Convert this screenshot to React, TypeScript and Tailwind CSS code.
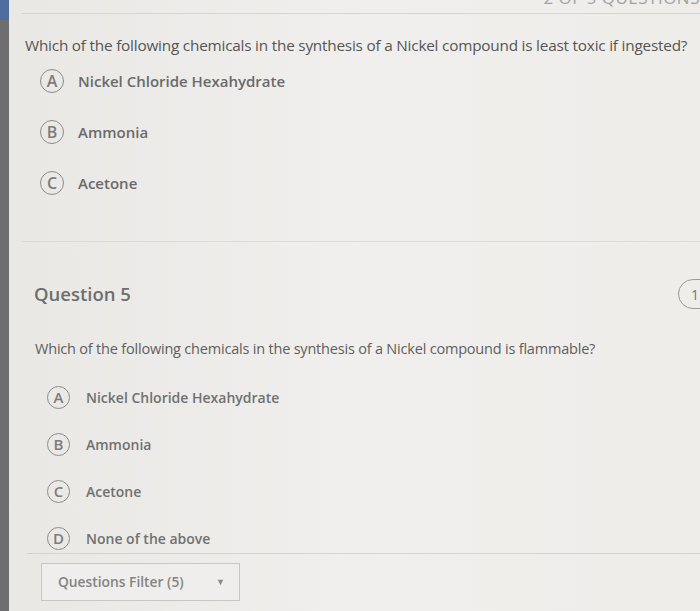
import React from 'react';

const Choice = ({ letter, text, size, circle, gap, textCls }: { letter: string; text: string; size: string; circle: string; gap: string; textCls: string }) => (
  <div className={`flex items-center ${size}`}>
    <div className={`${circle} shrink-0 rounded-full border-[1.5px] border-[#8c8c8c] flex items-center justify-center text-[#7c7c7c] font-semibold`}>
      {letter}
    </div>
    <span className={`${gap} ${textCls}`}>{text}</span>
  </div>
);

export default function App() {
  const q1 = ['Nickel Chloride Hexahydrate', 'Ammonia', 'Acetone'];
  const q2 = ['Nickel Chloride Hexahydrate', 'Ammonia', 'Acetone', 'None of the above'];
  const letters = ['A', 'B', 'C', 'D'];

  return (
    <div className="w-[700px] h-[611px] flex overflow-hidden bg-[#ebeae7]" style={{ fontFamily: '"Open Sans", "Liberation Sans", sans-serif' }}>
      {/* left edge of the screen */}
      <div className="w-[9px] shrink-0 bg-[#6e6e70] flex flex-col">
        <div className="h-[20px] bg-[#4f6d9c]" />
      </div>

      <div className="flex-1 flex flex-col bg-gradient-to-r from-[#e9e8e5] via-[#f0efed] to-[#eeedea]">
        {/* clipped header */}
        <div className="h-[14px] flex justify-end overflow-hidden border-b border-[#d6d5d2] ml-[12px]">
          <span className="-mt-[12px] text-[17px] leading-[20px] tracking-[0.5px] text-[#a3a3a3] uppercase whitespace-nowrap">2 of 5 Questions</span>
        </div>

        {/* question 4 */}
        <div className="pl-[16px] pr-[10px]">
          <p className="mt-[19px] h-[24px] leading-[24px] text-[15.3px] text-[#555555] tracking-[-0.2px] whitespace-nowrap">
            Which of the following chemicals in the synthesis of a Nickel compound is least toxic if ingested?
          </p>
          <div className="mt-[12px] pl-[15px] flex flex-col gap-[27px]">
            {q1.map((t, i) => (
              <Choice key={t} letter={letters[i]} text={t} size="h-[24px]" circle="w-[24px] h-[24px] text-[16px]" gap="ml-[14px]" textCls="text-[15px] text-[#6a6a6a] font-semibold" />
            ))}
          </div>
        </div>

        <div className="mt-[46px] ml-[12px] border-t border-[#dcdbd8]" />

        {/* question 5 */}
        <div className="pl-[25px] flex items-center justify-between mt-[38px] h-[28px]">
          <h2 className="text-[18.5px] text-[#6e6e6e] font-semibold">Question 5</h2>
          <div className="-mr-[30px] w-[52px] h-[30px] rounded-full border-[1.5px] border-[#9a9a9a] flex items-center pl-[12px] text-[14px] text-[#777]">1</div>
        </div>
        <p className="pl-[26px] mt-[31px] h-[20px] leading-[20px] text-[14.5px] text-[#5f5f5f] tracking-[-0.2px] whitespace-nowrap">
          Which of the following chemicals in the synthesis of a Nickel compound is flammable?
        </p>
        <div className="pl-[38px] mt-[27px] flex flex-col gap-[25px]">
          {q2.map((t, i) => (
            <Choice key={t} letter={letters[i]} text={t} size="h-[22px]" circle="w-[23px] h-[23px] text-[15px]" gap="ml-[16px]" textCls="text-[14px] text-[#717171] font-semibold" />
          ))}
        </div>

        <div className="mt-[4px] ml-[18px] border-t border-[#d4d3d0]" />

        {/* filter */}
        <div className="pl-[32px] mt-[9px]">
          <div className="w-[199px] h-[38px] border border-[#c8c7c4] bg-[#efeeec] flex items-center justify-between pl-[16px] pr-[14px]">
            <span className="text-[13.8px] text-[#848484] font-semibold">Questions Filter (5)</span>
            <span className="text-[9px] text-[#8a8a8a]">▼</span>
          </div>
        </div>
      </div>
    </div>
  );
}
